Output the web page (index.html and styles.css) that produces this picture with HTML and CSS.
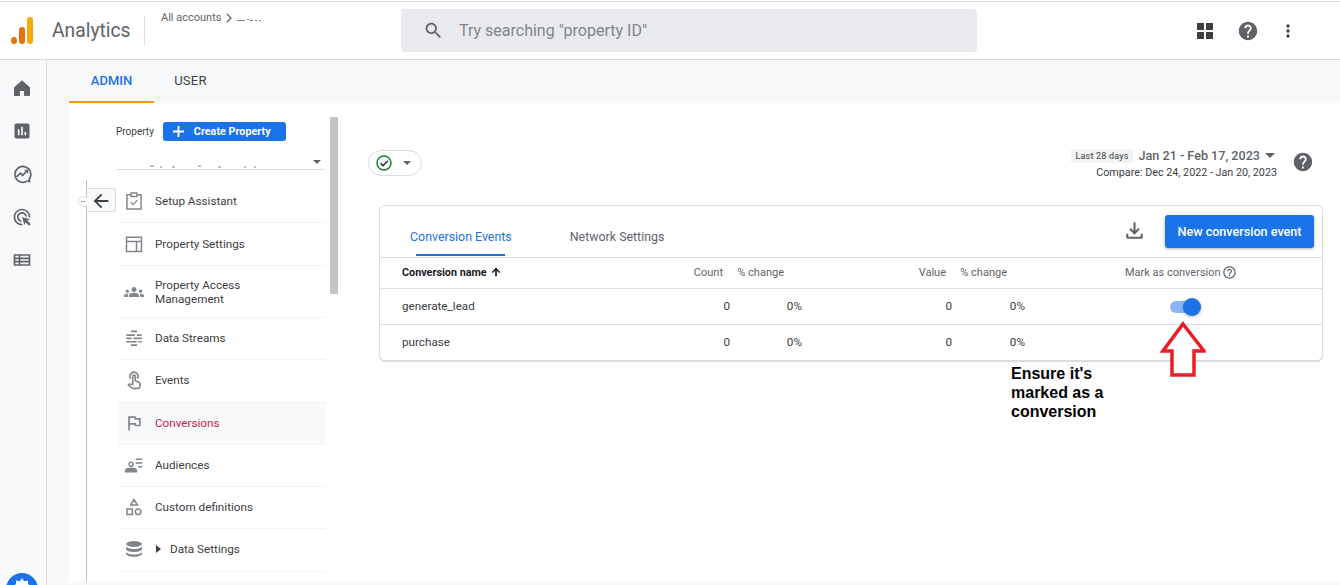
FILE: index.html
```html
<!DOCTYPE html>
<html lang="en">
<head>
    <meta charset="UTF-8">
    <meta name="viewport" content="width=device-width, initial-scale=1.0">
    <title>Conversions - Analytics</title>
    <link rel="stylesheet" href="styles.css">
</head>
<body>
    <header class="topbar">
        <div class="logo">
            <span class="logo-dot"></span>
            <span class="logo-mid"></span>
            <span class="logo-tall"></span>
        </div>
        <div class="brand">Analytics</div>
        <div class="crumbs">
            <span>All accounts</span>
            <svg class="crumb-arrow" viewBox="0 0 8 10"><path d="M2 1l4 4-4 4" fill="none" stroke="#5f6368" stroke-width="1.3"/></svg>
            <svg class="crumb-hidden" viewBox="0 0 25 3"><path d="M0 2.500h8M10 1.500h2M13 2.500h3M18 2.500h2M22 2.500h2" stroke="#80868b" stroke-width="1"/></svg>
        </div>
        <div class="search">
            <svg class="search-icon" viewBox="0 0 24 24"><path d="M15.5 14h-.79l-.28-.27C15.41 12.59 16 11.11 16 9.5 16 5.91 13.09 3 9.5 3S3 5.91 3 9.5 5.91 16 9.5 16c1.61 0 3.09-.59 4.23-1.57l.27.28v.79l5 4.99L20.49 19l-4.99-5zm-6 0C7.01 14 5 11.99 5 9.5S7.01 5 9.5 5 14 7.01 14 9.5 11.99 14 9.5 14z"/></svg>
            <span>Try searching "property ID"</span>
        </div>
        <div class="top-icons">
            <svg class="top-grid" viewBox="0 0 16 16"><path d="M0 0h7v7H0zM9 0h7v7H9zM0 9h7v7H0zM9 9h7v7H9z"/></svg>
            <svg class="top-help" viewBox="0 0 24 24"><path d="M12 2C6.48 2 2 6.48 2 12s4.48 10 10 10 10-4.48 10-10S17.52 2 12 2zm1 17h-2v-2h2v2zm2.07-7.75l-.9.92C13.45 12.9 13 13.5 13 15h-2v-.5c0-1.1.45-2.1 1.17-2.83l1.24-1.26c.37-.36.59-.86.59-1.41 0-1.1-.9-2-2-2s-2 .9-2 2H8c0-2.21 1.79-4 4-4s4 1.79 4 4c0 .88-.36 1.68-.93 2.25z"/></svg>
            <svg class="top-dots" viewBox="0 0 4 14"><circle cx="2" cy="2" r="1.7"/><circle cx="2" cy="7" r="1.7"/><circle cx="2" cy="12" r="1.7"/></svg>
        </div>
    </header>

    <div class="layout">
        <nav class="rail">
            <svg viewBox="0 0 20 20"><path d="M2.500 17.500V9.500L10 2.800l7.500 6.700v8h-5v-5h-5v5z" stroke="#5f6368" stroke-linejoin="round"/></svg>
            <svg viewBox="0 0 24 24"><path d="M19 3H5c-1.1 0-2 .9-2 2v14c0 1.1.9 2 2 2h14c1.1 0 2-.9 2-2V5c0-1.1-.9-2-2-2zM9 17H7v-7h2v7zm4 0h-2V7h2v10zm4 0h-2v-4h2v4z"/></svg>
            <svg viewBox="0 0 24 24"><path d="M20 19a9.500 9.500 0 1 0-1.500 1.300" fill="none" stroke="#5f6368" stroke-width="2"/><path d="M5.500 15.500l4.500-4.500 3 2.500 4.500-5" fill="none" stroke="#5f6368" stroke-width="2"/><path d="M14.500 7h5v5z"/><path d="M19 19h3v3h-3z"/></svg>
            <svg viewBox="0 0 24 24"><path d="M11.71 17.99C8.53 17.84 6 15.22 6 12c0-3.31 2.69-6 6-6 3.22 0 5.84 2.53 5.99 5.71l-2.1-.63C15.48 9.31 13.89 8 12 8c-2.21 0-4 1.79-4 4 0 1.89 1.31 3.48 3.08 3.89l.63 2.1zM22 12c0 .3-.01.6-.04.9l-1.97-.59c.01-.1.01-.21.01-.31 0-4.42-3.58-8-8-8s-8 3.58-8 8 3.58 8 8 8c.1 0 .21 0 .31-.01l.59 1.97c-.3.03-.6.04-.9.04-5.52 0-10-4.48-10-10S6.48 2 12 2s10 4.48 10 10zm-3.77 4.26L22 15l-10-3 3 10 1.26-3.77 4.27 4.27 1.98-1.98-4.28-4.26z"/></svg>
            <svg viewBox="0 0 24 24"><path d="M2 5h20v14H2z M4 7v2h4V7z M10 7v2h10V7z M4 11v2h4v-2z M10 11v2h10v-2z M4 15v2h4v-2z M10 15v2h10v-2z" fill-rule="evenodd"/></svg>
            <div class="rail-fab">
                <svg viewBox="0 0 24 24"><path fill="#fff" d="M12 6l1.600 2.400 2.800-.6.200 2.800 2.400 1.400-2.400 1.400-.2 2.800-2.800-.6L12 18l-1.600-2.400-2.800.6-.2-2.800L5 12l2.400-1.400.2-2.800 2.800.6z"/></svg>
            </div>
        </nav>

        <div class="workspace">
            <div class="tabs">
                <div class="tab tab-active">ADMIN</div>
                <div class="tab tab-user">USER</div>
            </div>
            <div class="panel">
                <aside class="sidebar">
                    <div class="side-col">
                        <div class="property">
                            <div class="property-row">
                                <span class="property-label">Property</span>
                                <button class="create-btn">
                                    <svg viewBox="0 0 14 14"><path d="M6 1h2v5h5v2H8v5H6V8H1V6h5z" fill="#fff"/></svg>
                                    <span>Create Property</span>
                                </button>
                            </div>
                            <div class="property-select">
                                <svg class="select-specks" viewBox="0 0 130 3"><path d="M2 1h4M12 2h2M24 2h3M50 1h3M70 2h3M96 2h2M106 2h2" stroke="#80868b" stroke-width="1"/></svg>
                                <span class="caret"></span>
                            </div>
                        </div>
                        <div class="side-nav">
                            <span class="collapse-dot"></span>
                            <button class="back-btn">
                                <svg viewBox="0 0 24 24"><path d="M20 11H7.830l5.590-5.590L12 4l-8 8 8 8 1.410-1.410L7.830 13H20z"/></svg>
                            </button>
                            <a class="nav-item nav-h43" href="#">
                                <svg viewBox="0 0 24 24" fill="none" stroke="#80868b" stroke-width="1.800"><path d="M8 4.500H3.500v17h17v-17H16M8.500 2.500h7v4h-7z"/><path d="M8 13.500l3 3 5-5.500" stroke-width="1.400"/></svg>
                                <span>Setup Assistant</span>
                            </a>
                            <a class="nav-item nav-h43" href="#">
                                <svg viewBox="0 0 24 24" fill="none" stroke="#80868b" stroke-width="1.800"><path d="M3 4h18v17H3zM3 9h18M15 9v12"/></svg>
                                <span>Property Settings</span>
                            </a>
                            <a class="nav-item nav-h52" href="#">
                                <svg viewBox="0 0 24 24" fill="#80868b"><path d="M4 13c1.1 0 2-.9 2-2s-.9-2-2-2-2 .9-2 2 .9 2 2 2zm1.130 1.100C4.760 14.040 4.390 14 4 14c-.99 0-1.930.21-2.780.58C.48 14.900 0 15.620 0 16.430V18h4.500v-1.610c0-.83.23-1.610.63-2.290zM20 13c1.100 0 2-.9 2-2s-.9-2-2-2-2 .9-2 2 .9 2 2 2zm4 3.430c0-.81-.48-1.530-1.220-1.850C21.930 14.210 20.990 14 20 14c-.39 0-.76.04-1.130.1.4.68.63 1.460.63 2.290V18H24v-1.570zm-7.760-2.780C15.070 13.130 13.630 12.750 12 12.750c-1.630 0-3.070.39-4.240.9C6.680 14.130 6 15.210 6 16.390V18h12v-1.610c0-1.180-.68-2.260-1.760-2.740zM9 9c0-1.660 1.340-3 3-3s3 1.340 3 3-1.340 3-3 3-3-1.340-3-3z"/></svg>
                                <span>Property Access<br>Management</span>
                            </a>
                            <a class="nav-item nav-h42" href="#">
                                <svg viewBox="0 0 24 24" fill="none" stroke="#80868b" stroke-width="2" stroke-linecap="round"><path d="M9 4h6M3.500 8.500h9M16 8.500h4.500M3.500 12.500h5M12 12.500h8.500M3.500 16.500h11M18 16.500h2.500M9 20.500h6"/></svg>
                                <span>Data Streams</span>
                            </a>
                            <a class="nav-item nav-h43 nav-up" href="#">
                                <svg viewBox="0 0 24 24" fill="none" stroke="#80868b" stroke-width="1.900" stroke-linejoin="round"><path d="M8.200 10.500a4.800 4.800 0 1 1 7.600 0"/><path d="M10.500 17.500V7.500a1.500 1.500 0 0 1 3 0V13l4.800 2c.9.4 1.300 1.200 1.100 2.100l-.8 3.900c-.1.600-.6 1-1.300 1h-6.500c-.4 0-.7-.1-1-.4L5.200 17.800l.8-.8c.3-.3.6-.3 1-.2z"/></svg>
                                <span>Events</span>
                            </a>
                            <a class="nav-item nav-h42 nav-active" href="#">
                                <svg viewBox="0 0 24 24" fill="#80868b"><path d="M12.360 6l.4 2H18v6h-3.360l-.4-2H7V6h5.360M14 4H5v17h2v-7h5.600l.4 2h7V6h-5.600L14 4z"/></svg>
                                <span>Conversions</span>
                            </a>
                            <a class="nav-item nav-h42" href="#">
                                <svg viewBox="0 0 24 24" fill="none" stroke="#80868b" stroke-width="1.700"><circle cx="8.500" cy="11" r="2.400"/><path d="M2 20v-1.500c0-1.600 3-2.800 6.500-2.800s6.500 1.200 6.500 2.800V20z" fill="#80868b"/><path d="M14 5h8M14 9.500h8M17 14h5"/></svg>
                                <span>Audiences</span>
                            </a>
                            <a class="nav-item nav-h42" href="#">
                                <svg viewBox="0 0 24 24" fill="none" stroke="#80868b" stroke-width="1.800"><path d="M12 3l4 6.500H8zM3.500 14.500h6.500V21H3.500z"/><circle cx="17" cy="17.800" r="3.400"/></svg>
                                <span>Custom definitions</span>
                            </a>
                            <a class="nav-item nav-h43 nav-up" href="#">
                                <svg viewBox="0 0 24 24" fill="#80868b"><ellipse cx="12" cy="6" rx="9.500" ry="3.500"/><path d="M2.500 9c1 2 5.500 3 9.500 3s8.500-1 9.500-3v3.500c-1 2-5.500 3-9.500 3s-8.500-1-9.500-3z"/><path d="M2.500 15.500c1 2 5.500 3 9.500 3s8.500-1 9.500-3v2.500c-1 2.200-5.500 3.500-9.500 3.500s-8.500-1.300-9.500-3.500z"/></svg>
                                <span class="expand-arrow"></span>
                                <span>Data Settings</span>
                            </a>
                        </div>
                    </div>
                    <div class="scrollbar"></div>
                </aside>

                <main class="content">
                    <div class="toolbar">
                        <div class="status-pill">
                            <svg viewBox="0 0 18 18"><circle cx="9" cy="9" r="7" fill="none" stroke="#188038" stroke-width="1.500"/><path d="M5.500 9.200l2.500 2.500 4.800-5" fill="none" stroke="#202124" stroke-width="1.300"/></svg>
                            <span class="caret"></span>
                        </div>
                        <div class="date-area">
                            <div class="date-text">
                                <div class="date-top">
                                    <span class="date-chip">Last 28 days</span>
                                    <span class="date-range">Jan 21 - Feb 17, 2023</span>
                                    <span class="caret caret-date"></span>
                                </div>
                                <div class="date-compare">Compare: Dec 24, 2022 - Jan 20, 2023</div>
                            </div>
                            <svg class="date-help" viewBox="0 0 24 24"><path d="M12 2C6.480 2 2 6.480 2 12s4.480 10 10 10 10-4.480 10-10S17.520 2 12 2zm1 17h-2v-2h2v2zm2.070-7.750l-.9.920C13.450 12.900 13 13.500 13 15h-2v-.5c0-1.100.45-2.100 1.170-2.830l1.240-1.260c.37-.36.59-.86.59-1.410 0-1.100-.9-2-2-2s-2 .9-2 2H8c0-2.210 1.790-4 4-4s4 1.790 4 4c0 .88-.36 1.680-.93 2.250z"/></svg>
                        </div>
                    </div>

                    <section class="card">
                        <div class="card-head">
                            <div class="card-tab card-tab-active">Conversion Events</div>
                            <div class="card-tab">Network Settings</div>
                            <svg class="download" viewBox="0 0 24 24"><path d="M18 15v3H6v-3H4v3c0 1.100.9 2 2 2h12c1.100 0 2-.9 2-2v-3h-2zm-1-4l-1.410-1.410L13 12.170V4h-2v8.170L8.410 9.590 7 11l5 5 5-5z"/></svg>
                            <button class="new-btn">New conversion event</button>
                        </div>
                        <div class="row row-head">
                            <div class="cell-name">Conversion name
                                <svg viewBox="0 0 24 24"><path d="M4 12l1.410 1.410L11 7.830V20h2V7.830l5.580 5.590L20 12l-8-8z" stroke="#202124" stroke-width="1.500"/></svg>
                            </div>
                            <div class="cell-count">Count</div>
                            <div class="cell-pct">% change</div>
                            <div class="cell-value">Value</div>
                            <div class="cell-pct">% change</div>
                            <div class="cell-mark">Mark as conversion
                                <svg viewBox="0 0 24 24"><path d="M11 18h2v-2h-2v2zm1-16C6.480 2 2 6.480 2 12s4.480 10 10 10 10-4.480 10-10S17.520 2 12 2zm0 18c-4.410 0-8-3.590-8-8s3.590-8 8-8 8 3.590 8 8-3.590 8-8 8zm0-14c-2.210 0-4 1.790-4 4h2c0-1.100.9-2 2-2s2 .9 2 2c0 2-3 1.750-3 5h2c0-2.250 3-2.500 3-5 0-2.210-1.790-4-4-4z"/></svg>
                            </div>
                        </div>
                        <div class="row row-data">
                            <div class="cell-name">generate_lead</div>
                            <div class="cell-num">0</div>
                            <div class="cell-num">0%</div>
                            <div class="cell-num">0</div>
                            <div class="cell-num">0%</div>
                            <div class="cell-toggle"><span class="toggle"><span class="toggle-knob"></span></span></div>
                        </div>
                        <div class="row row-data row-last">
                            <div class="cell-name">purchase</div>
                            <div class="cell-num">0</div>
                            <div class="cell-num">0%</div>
                            <div class="cell-num">0</div>
                            <div class="cell-num">0%</div>
                            <div class="cell-toggle"></div>
                        </div>

                        <!-- annotation drawn on top of the screenshot -->
                        <svg class="note-arrow" viewBox="0 0 46 58"><path d="M23 3L44 30H34V54H12V30H3z" fill="#fff" stroke="#ed1c24" stroke-width="3.500"/></svg>
                        <div class="note-text">Ensure it's<br>marked as a<br>conversion</div>
                    </section>
                </main>
            </div>
        </div>
    </div>
</body>
</html>
```

FILE: styles.css
```css
* {
    box-sizing: border-box;
}

body {
    font-family: Roboto, "Liberation Sans", sans-serif;
    margin: 0;
    padding: 1px 0 0;
    width: 1340px;
    height: 585px;
    overflow: hidden;
    background-color: #fff;
    color: #3c4043;
    font-size: 12px;
}

svg {
    display: block;
    flex: none;
}

button {
    font-family: inherit;
    border: none;
    cursor: pointer;
}

/* top bar */

.topbar {
    display: flex;
    align-items: center;
    height: 59px;
    border-top: 1px solid #dadce0;
    border-bottom: 1px solid #dadce0;
}

.logo {
    display: flex;
    align-items: flex-end;
    gap: 2px;
    width: 24px;
    height: 27px;
    margin-left: 11px;
}

.logo-dot {
    width: 6px;
    height: 7px;
    border-radius: 50%;
    background-color: #e8710a;
}

.logo-mid {
    width: 6px;
    height: 17px;
    border-radius: 3px;
    background-color: #e8710a;
}

.logo-tall {
    width: 6px;
    height: 27px;
    border-radius: 3px;
    background-color: #f9ab00;
}

.brand {
    margin-left: 17px;
    width: 93px;
    height: 29px;
    line-height: 29px;
    font-size: 19.3px;
    color: #5f6368;
    border-right: 1px solid #dadce0;
}

.crumbs {
    display: flex;
    align-items: center;
    align-self: flex-start;
    gap: 4px;
    margin-top: 9px;
    margin-left: 16px;
    width: 240px;
    font-size: 11px;
    color: #5f6368;
}

.crumb-arrow {
    width: 8px;
    height: 10px;
}

.crumb-hidden {
    width: 25px;
    height: 3px;
    margin-top: 3px;
}

.search {
    display: flex;
    align-items: center;
    width: 576px;
    height: 43px;
    background-color: #e8eaed;
    border-radius: 4px;
    font-size: 16px;
    color: #80868b;
    padding-left: 22px;
}

.search-icon {
    width: 21px;
    height: 21px;
    margin-right: 15px;
    fill: #5f6368;
}

.top-icons {
    display: flex;
    align-items: center;
    margin-left: 220px;
}

.top-grid {
    width: 16px;
    height: 16px;
    fill: #3c4043;
}

.top-help {
    width: 22px;
    height: 22px;
    margin-left: 24px;
    fill: #5f6368;
}

.top-dots {
    width: 4px;
    height: 14px;
    margin-left: 27px;
    fill: #3c4043;
}

/* page layout */

.layout {
    display: flex;
    height: 525px;
}

.rail {
    display: flex;
    flex-direction: column;
    align-items: center;
    gap: 23px;
    width: 47px;
    padding: 18px 3px 0 0;
    background-color: #f8f9fa;
    border-right: 1px solid #dadce0;
    position: relative;
    fill: #5f6368;
}

.rail > svg {
    width: 20px;
    height: 20px;
}

.rail-fab {
    position: absolute;
    left: 6px;
    top: 513px;
    width: 32px;
    height: 32px;
    border-radius: 50%;
    background-color: #1a73e8;
}

.rail-fab svg {
    width: 32px;
    height: 32px;
    margin-top: -3px;
}

.workspace {
    flex: 1;
    display: flex;
    flex-direction: column;
    background-color: #f8f9fa;
    padding-left: 22px;
    padding-bottom: 3px;
}

.tabs {
    display: flex;
    flex: none;
    height: 43px;
}

.tab {
    width: 85px;
    padding-top: 13px;
    text-align: center;
    font-size: 13px;
    color: #3c4043;
    font-weight: 500;
}

.tab-active {
    color: #1a73e8;
    border-bottom: 2px solid #f29900;
}

.tab-user {
    width: 73px;
    font-weight: 400;
    letter-spacing: .3px;
}

.panel {
    flex: 1;
    display: flex;
    background-color: #fff;
}

/* admin sidebar */

.sidebar {
    display: flex;
    flex: none;
    width: 269px;
}

.side-col {
    width: 261px;
}

.property {
    height: 77px;
    padding: 18px 5px 0 47px;
}

.property-row {
    display: flex;
    align-items: center;
    gap: 9px;
    height: 20px;
}

.property-label {
    font-size: 10px;
    color: #3c4043;
}

.create-btn {
    display: flex;
    align-items: center;
    width: 123px;
    height: 19px;
    padding: 0 0 0 9px;
    background-color: #1a73e8;
    border-radius: 3px;
    color: #fff;
    font-size: 10.8px;
    font-weight: 700;
}

.create-btn svg {
    width: 13px;
    height: 13px;
    margin-right: 9px;
}

.property-select {
    position: relative;
    height: 29px;
    border-bottom: 1px solid #dadce0;
}

.select-specks {
    position: absolute;
    left: 32px;
    top: 24px;
    width: 130px;
    height: 3px;
}

.caret {
    display: block;
    width: 0;
    height: 0;
    border-left: 4px solid transparent;
    border-right: 4px solid transparent;
    border-top: 4px solid #5f6368;
}

.property-select .caret {
    position: absolute;
    right: 4px;
    top: 19px;
}

.side-nav {
    position: relative;
    height: 402px;
    margin-left: 17px;
    margin-right: 5px;
    padding-left: 31px;
    border-left: 1px solid #bdc1c6;
}

.collapse-dot {
    position: absolute;
    left: -9px;
    top: 16px;
    width: 11px;
    height: 11px;
    border: 1px solid #dadce0;
    border-radius: 50%;
    background-color: #fff;
}

.collapse-dot::before {
    content: "";
    position: absolute;
    left: 2px;
    top: 4px;
    width: 4px;
    height: 1px;
    background-color: #9aa0a6;
}

.back-btn {
    position: absolute;
    left: 0;
    top: 8px;
    width: 29px;
    height: 24px;
    padding: 1px 0 0 3px;
    background-color: #f8f9fa;
    border: 1px solid #dadce0;
    border-left: none;
    border-radius: 0 2px 2px 0;
}

.back-btn svg {
    width: 22px;
    height: 22px;
    fill: #3c4043;
}

.nav-item {
    display: flex;
    align-items: center;
    border-bottom: 1px solid #f1f3f4;
    color: #3c4043;
    text-decoration: none;
    font-size: 11.7px;
    line-height: 14px;
    padding-left: 6px;
}

.nav-item svg {
    width: 20px;
    height: 20px;
    margin-right: 11px;
}

.nav-h42 {
    height: 42px;
    padding-bottom: 2px;
}

.nav-h43 {
    height: 43px;
}

.nav-h52 {
    height: 52px;
}

.nav-up {
    padding-bottom: 2px;
}

.nav-active {
    background-color: #f8f9fa;
    color: #c5224a;
}

.expand-arrow {
    width: 0;
    height: 0;
    margin-right: 9px;
    margin-left: 1px;
    border-top: 4px solid transparent;
    border-bottom: 4px solid transparent;
    border-left: 5px solid #3c4043;
}

.scrollbar {
    width: 8px;
    height: 177px;
    margin-top: 14px;
    background-color: #c4c4c4;
}

/* main content */

.content {
    flex: 1;
    padding: 45px 0 0 30px;
}

.toolbar {
    display: flex;
    justify-content: space-between;
    height: 57px;
}

.status-pill {
    display: flex;
    align-items: center;
    gap: 10px;
    width: 54px;
    height: 26px;
    margin-top: 2px;
    padding-left: 6px;
    border: 1px solid #dadce0;
    border-radius: 13px;
}

.status-pill svg {
    width: 18px;
    height: 18px;
}

.date-area {
    display: flex;
    align-items: center;
    align-self: flex-start;
    margin-top: -2px;
    margin-right: 26px;
    height: 34px;
}

.date-text {
    text-align: right;
}

.date-top {
    display: flex;
    align-items: center;
    height: 16px;
}

.date-chip {
    height: 14px;
    line-height: 14px;
    padding: 0 4px;
    background-color: #f1f3f4;
    font-size: 9px;
    color: #3c4043;
    letter-spacing: .2px;
}

.date-range {
    margin-left: 6px;
    font-size: 12.6px;
    font-weight: 500;
    color: #5f6368;
}

.caret-date {
    margin-left: 5px;
    margin-right: 2px;
    border-left-width: 5px;
    border-right-width: 5px;
    border-top-width: 5px;
}

.date-compare {
    margin-top: 2px;
    font-size: 10.75px;
    color: #3c4043;
}

.date-help {
    width: 22px;
    height: 22px;
    margin-left: 15px;
    margin-top: -2px;
    fill: #5f6368;
}

.card {
    position: relative;
    width: 944px;
    height: 157px;
    margin-left: 11px;
    border: 1px solid #dadce0;
    border-bottom-width: 2px;
    border-radius: 6px;
}

.card-head {
    display: flex;
    align-items: flex-start;
    height: 52px;
    border-bottom: 1px solid #dadce0;
}

.card-tab {
    height: 50px;
    padding: 23px 0 0;
    margin-left: 30px;
    font-size: 12.4px;
    color: #5f6368;
}

.card-tab-active {
    position: relative;
    color: #1a73e8;
}

.card-tab-active::after {
    content: "";
    position: absolute;
    left: 6px;
    right: 7px;
    bottom: 0;
    height: 2px;
    background-color: #1a73e8;
}

.card-tab + .card-tab {
    margin-left: 58px;
}

.download {
    width: 25px;
    height: 25px;
    margin-left: auto;
    margin-top: 12px;
    fill: #5f6368;
}

.new-btn {
    width: 149px;
    height: 33px;
    margin-top: 9px;
    margin-left: 18px;
    margin-right: 8px;
    padding-bottom: 2px;
    background-color: #1a73e8;
    color: #fff;
    border-radius: 3px;
    font-size: 12.6px;
    font-weight: 500;
    box-shadow: 0 1px 3px rgba(60, 64, 67, .4);
}

.row {
    display: grid;
    grid-template-columns: 280px 70px 72px 150px 73px 1fr;
    align-items: center;
    padding-bottom: 2px;
    border-bottom: 1px solid #dadce0;
    font-size: 11.7px;
}

.row-head {
    height: 31px;
    font-size: 11px;
    color: #5f6368;
}

.row-data {
    height: 36px;
}

.row-last {
    border-bottom: none;
    height: 35px;
}

.cell-name {
    padding-left: 22px;
    color: #3c4043;
}

.row-head .cell-name {
    display: flex;
    align-items: center;
    gap: 3px;
    font-size: 10.8px;
    font-weight: 700;
    color: #202124;
}

.row-head .cell-name svg {
    width: 12px;
    height: 12px;
    fill: #202124;
}

.cell-count {
    text-align: right;
    padding-right: 7px;
}

.cell-pct {
    text-align: right;
    padding-right: 18px;
}

.cell-value {
    text-align: right;
    padding-right: 6px;
}

.cell-num {
    text-align: right;
    color: #3c4043;
}

.cell-mark {
    display: flex;
    align-items: center;
    gap: 1px;
    padding-left: 100px;
}

.cell-mark svg {
    width: 15px;
    height: 15px;
    fill: #5f6368;
}

.cell-toggle {
    padding-left: 145px;
}

.toggle {
    display: block;
    position: relative;
    top: 1px;
    width: 31px;
    height: 12px;
    border-radius: 6px;
    background-color: #8ab4f8;
}

.toggle-knob {
    position: absolute;
    right: 0;
    top: -3px;
    width: 18px;
    height: 18px;
    border-radius: 50%;
    background-color: #1a73e8;
    box-shadow: 0 1px 3px rgba(60, 64, 67, .4);
}

.note-arrow {
    position: absolute;
    left: 780px;
    top: 115px;
    width: 46px;
    height: 58px;
}

.note-text {
    position: absolute;
    left: 631px;
    top: 158px;
    font-family: "Liberation Sans", Arial, sans-serif;
    font-size: 16px;
    line-height: 19px;
    font-weight: 700;
    color: #000;
}
```
